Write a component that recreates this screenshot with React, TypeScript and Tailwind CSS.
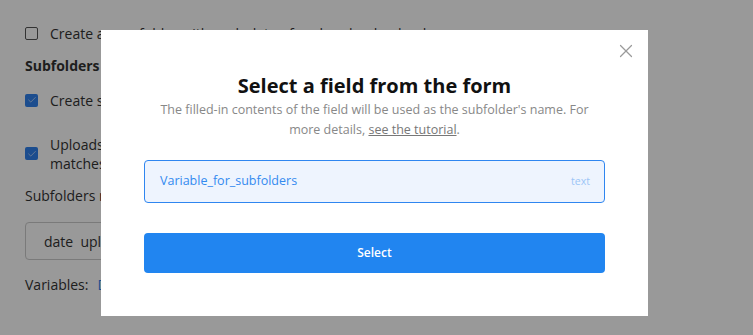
import { Check, X } from 'lucide-react';

function Box({ checked }: { checked?: boolean }) {
  return checked ? (
    <span className="w-[13px] h-[13px] rounded-[2px] bg-[#2f80ed] flex items-center justify-center shrink-0">
      <Check size={10} strokeWidth={2} className="text-white/70" />
    </span>
  ) : (
    <span className="w-[13px] h-[13px] rounded-[2px] border border-[#555] bg-white shrink-0" />
  );
}

export default function App() {
  return (
    <div className="relative w-[753px] h-[335px] overflow-hidden bg-white font-['Open_Sans',sans-serif] text-[14px] text-[#333]">
      {/* page behind the dialog */}
      <div className="pl-[25px] pt-[23px] flex flex-col">
        <label className="flex items-center gap-[12px] h-[20px]">
          <Box />
          <span>Create a new folder with each date of each upload upload</span>
        </label>
        <h3 className="font-bold mt-[13px] leading-[20px]">Subfolders</h3>
        <label className="flex items-center gap-[12px] h-[20px] mt-[14px]">
          <Box checked />
          <span>Create subfolders for each upload</span>
        </label>
        <label className="flex items-center gap-[12px] mt-[24px]">
          <Box checked />
          <span className="leading-[19px] pt-[1px]">
            Uploads are placed into the subfolder whose name
            <br />
            matches the value of the field
          </span>
        </label>
        <p className="mt-[13px] leading-[20px]">Subfolders name</p>
        <div className="mt-[16px] w-[300px] h-[38px] border border-[#ccc] rounded-[4px] flex items-center px-[18px]">
          date&nbsp; upload
        </div>
        <p className="mt-[15px] leading-[20px]">
          Variables:<span className="ml-[9px] text-[#2f80ed]">Date</span>
        </p>
      </div>

      {/* overlay */}
      <div className="absolute inset-0 bg-black/40" />

      {/* dialog */}
      <div className="absolute left-[101px] top-[30px] w-[547px] h-[286px] bg-white px-[43px] pt-[42px]">
        <button className="absolute right-[11px] top-[10px] text-[#9a9a9a]">
          <X size={22} strokeWidth={1.3} />
        </button>
        <h2 className="text-center text-[20px] font-bold leading-[28px] text-[#111]">Select a field from the form</h2>
        <p className="text-center text-[12.5px] leading-[20px] text-[#888] px-[12px]">
          The filled-in contents of the field will be used as the subfolder's name. For more details,{' '}
          <span className="underline text-[#777]">see the tutorial</span>.
        </p>
        <div className="mt-[20px] h-[43px] rounded-[4px] border border-[#2f86f0] bg-[#eef4fe] flex items-center justify-between pl-[15px] pr-[14px]">
          <span className="text-[12.5px] text-[#338af0]">Variable_for_subfolders</span>
          <span className="text-[10.5px] text-[#9cc5f7]">text</span>
        </div>
        <button className="mt-[30px] w-full h-[40px] rounded-[4px] bg-[#2185f0] text-white text-[12px] font-semibold">
          Select
        </button>
      </div>
    </div>
  );
}
